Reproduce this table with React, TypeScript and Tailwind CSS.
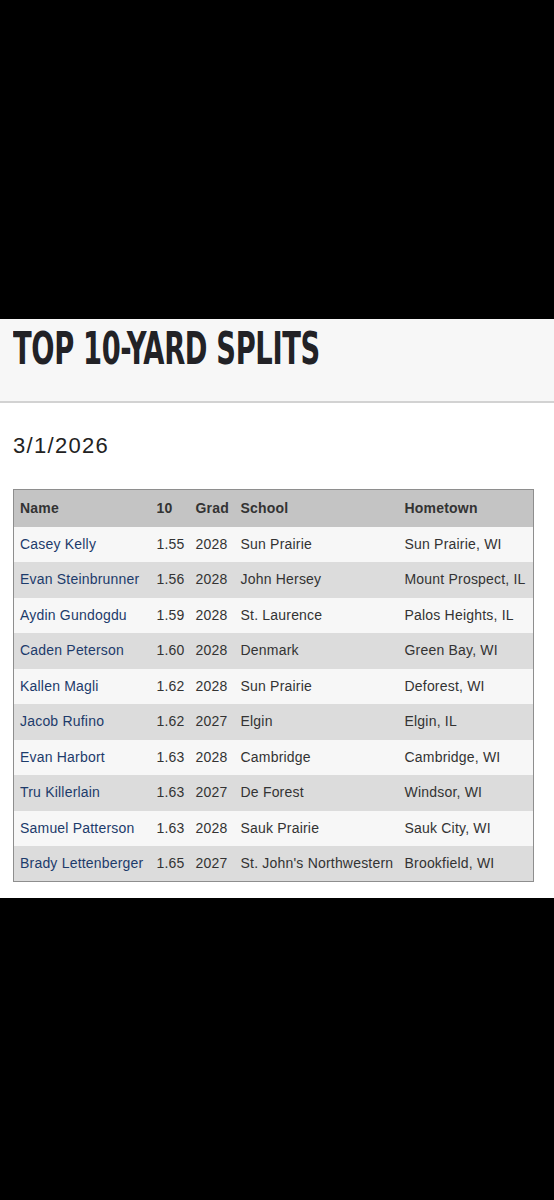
import React from "react";

const rows = [
  ["Casey Kelly", "1.55", "2028", "Sun Prairie", "Sun Prairie, WI"],
  ["Evan Steinbrunner", "1.56", "2028", "John Hersey", "Mount Prospect, IL"],
  ["Aydin Gundogdu", "1.59", "2028", "St. Laurence", "Palos Heights, IL"],
  ["Caden Peterson", "1.60", "2028", "Denmark", "Green Bay, WI"],
  ["Kallen Magli", "1.62", "2028", "Sun Prairie", "Deforest, WI"],
  ["Jacob Rufino", "1.62", "2027", "Elgin", "Elgin, IL"],
  ["Evan Harbort", "1.63", "2028", "Cambridge", "Cambridge, WI"],
  ["Tru Killerlain", "1.63", "2027", "De Forest", "Windsor, WI"],
  ["Samuel Patterson", "1.63", "2028", "Sauk Prairie", "Sauk City, WI"],
  ["Brady Lettenberger", "1.65", "2027", "St. John's Northwestern", "Brookfield, WI"],
];

export default function App() {
  return (
    <div className="w-[554px] min-h-[1200px] bg-black flex flex-col">
      <div className="h-[319px] shrink-0" />
      <div className="bg-white pb-[16px]">
        <header className="bg-[#f7f7f7] border-b-2 border-[#d2d2d2] h-[84px] px-[13px] pt-[8px]">
          <h1
            className="inline-block origin-left scale-x-[0.69] text-[44px] leading-[44px] font-black text-[#222226] tracking-[-0.5px] whitespace-nowrap"
            style={{ fontFamily: '"DejaVu Sans Condensed", "DejaVu Sans", sans-serif' }}
          >
            TOP 10-YARD SPLITS
          </h1>
        </header>
        <div
          className="px-[13px] pt-[28px] text-[22px] leading-[30px] text-[#222] tracking-[1.3px]"
          style={{ fontFamily: '"Liberation Sans", Arial, sans-serif' }}
        >
          3/1/2026
        </div>
        <div className="px-[13px] pt-[28px]">
          <table
            className="w-[521px] border border-[#8e8e8e] border-collapse table-fixed text-[14px] tracking-[0.2px] text-[#333]"
            style={{ fontFamily: '"Liberation Sans", Arial, sans-serif' }}
          >
            <colgroup>
              <col className="w-[138px]" />
              <col className="w-[39px]" />
              <col className="w-[45px]" />
              <col className="w-[164px]" />
              <col />
            </colgroup>
            <thead>
              <tr className="bg-[#c4c4c4] h-[37px]">
                <th className="text-left font-bold pl-[6px]">Name</th>
                <th className="text-left font-bold pl-[5px]">10</th>
                <th className="text-left font-bold pl-[5px]">Grad</th>
                <th className="text-left font-bold pl-[5px]">School</th>
                <th className="text-left font-bold pl-[5px]">Hometown</th>
              </tr>
            </thead>
            <tbody>
              {rows.map((r, i) => (
                <tr key={i} className={i % 2 === 0 ? "bg-[#f7f7f7] h-[35.5px]" : "bg-[#dcdcdc] h-[35.5px]"}>
                  <td className="pl-[6px] text-[#1d3b6b] whitespace-nowrap">{r[0]}</td>
                  <td className="pl-[5px] whitespace-nowrap">{r[1]}</td>
                  <td className="pl-[5px] whitespace-nowrap">{r[2]}</td>
                  <td className="pl-[5px] whitespace-nowrap">{r[3]}</td>
                  <td className="pl-[5px] whitespace-nowrap">{r[4]}</td>
                </tr>
              ))}
            </tbody>
          </table>
        </div>
      </div>
      <div className="flex-1" />
    </div>
  );
}
